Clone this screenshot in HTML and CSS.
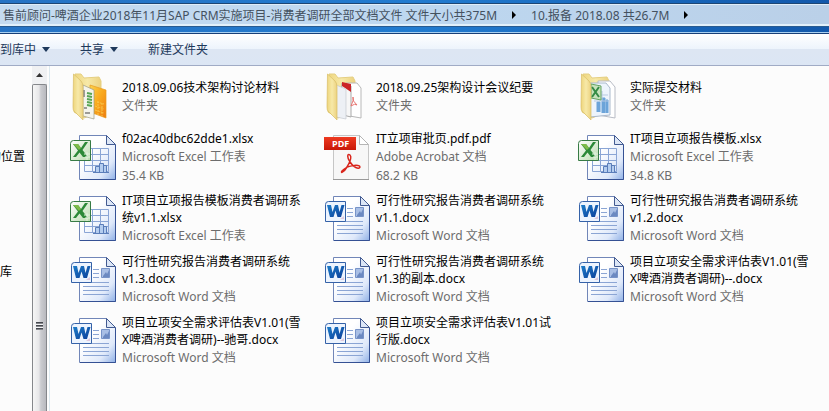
FILE: index.html
```
<!DOCTYPE html>
<html lang="zh-CN">
<head>
<meta charset="utf-8">
<title>10.报备 2018.08 共26.7M</title>
<link rel="stylesheet" href="styles.css">
</head>
<body>
<svg class="defs" width="0" height="0" aria-hidden="true">
  <defs>
    <linearGradient id="g-page" x1="0" y1="0" x2="1" y2="1">
      <stop offset="0.35" stop-color="#fff"/><stop offset="0.75" stop-color="#dfe9fa"/><stop offset="1" stop-color="#8fb0e6"/>
    </linearGradient>
    <linearGradient id="g-folder" x1="0" y1="0" x2="1" y2="0">
      <stop offset="0" stop-color="#eed57c"/><stop offset="0.5" stop-color="#f7e9a8"/><stop offset="1" stop-color="#ecd280"/>
    </linearGradient>
    <linearGradient id="g-orange" x1="0" y1="0" x2="1" y2="1">
      <stop offset="0" stop-color="#fbd24e"/><stop offset="0.5" stop-color="#f9a81c"/><stop offset="1" stop-color="#ee7c10"/>
    </linearGradient>
    <linearGradient id="g-green" x1="0" y1="0" x2="1" y2="1">
      <stop offset="0" stop-color="#fff"/><stop offset="1" stop-color="#b9dcae"/>
    </linearGradient>
    <linearGradient id="g-red" x1="0" y1="0" x2="0" y2="1">
      <stop offset="0" stop-color="#ee3a20"/><stop offset="1" stop-color="#c81808"/>
    </linearGradient>
    <linearGradient id="g-w" x1="0" y1="0" x2="1" y2="1">
      <stop offset="0" stop-color="#1d7cc8"/><stop offset="1" stop-color="#0c3f9a"/>
    </linearGradient>
  </defs>
  <symbol id="page" viewBox="0 0 48 48">
    <path d="M9.500 1.500H36.500L45.500 10.500V45.500H9.500Z" fill="url(#g-page)" stroke="#7186b8"/>
    <path d="M10 45.500H45.500V11" fill="none" stroke="#355194"/>
    <path d="M36.500 1.500V10.500H45.500Z" fill="#dce6f6" stroke="#425a91"/>
  </symbol>
  <symbol id="excel" viewBox="0 0 48 48">
    <use href="#page"/>
    <path d="M14.500 14.500H38.500V37.500H14.500ZM14 20.500H39M14 26.500H39M14 31.500H39M22.500 14V38M30.500 14V38" fill="none" stroke="#8aa5d5"/>
    <path d="M25.500 38V32.500H29.500V38M29.500 38V29.500H33.500V38M33.500 38V31.500H36.500V38" fill="#b4cdef" stroke="#5a7db9"/>
    <path d="M23 38.500H39" stroke="#5a7db9"/>
    <path d="M3.500 6.500H20.500V26.500H.5V9.500Q.5 6.500 3.500 6.500Z" fill="url(#g-green)" stroke="#377b45"/>
    <path d="M3 10H8L11 14L15 8H18L12.500 16L18 23H13L9.500 18.500L6 23H3L8 16.500Z" fill="#2c8938"/>
    <path d="M3 10H8L11 14L9 16Z" fill="#7dbb48"/>
    <path d="M14 20H20M15 23H20M17 18V26" stroke="#e3f2df"/>
  </symbol>
  <symbol id="word" viewBox="0 0 48 48">
    <use href="#page"/>
    <path d="M23 13.500H29M23 17.500H29M23 21.500H29M13 26.500H39M13 30.500H39M13 34.500H39M13 38.500H39" stroke="#8ba5d4"/>
    <path d="M31.500 12.500H39.500V21.500H31.500Z" fill="#a9bfe5" stroke="#7793c8"/>
    <path d="M33 20L36 16L37 18L39 14V21H33Z" fill="#6b89c1"/>
    <path d="M4.500 6.500H21.500V26.500H1.500V9.500Q1.500 6.500 4.500 6.500Z" fill="#edf4fe" stroke="#3562a8"/>
    <path d="M3 10H7L8.500 17L11 10H14L15.500 17L17.500 10H20.500L17 22H13.500L11.500 15.500L9.500 22H6Z" fill="url(#g-w)"/>
    <path d="M16 24L20 21V24Z" fill="#dfc8dc"/>
  </symbol>
  <symbol id="folder-back" viewBox="0 0 48 48">
    <path d="M5 1H11L14 5L29 4L31 8V38L14 45L4 39Z" fill="url(#g-folder)" stroke="#e5cf82"/>
  </symbol>
  <symbol id="folder-front" viewBox="0 0 48 48">
    <path d="M3.500 1L11 8Q13 10 13 14V47L4 38Q3 37 3 34Z" fill="url(#g-folder)" stroke="#d9bd65" stroke-width=".7"/>
  </symbol>
  <symbol id="folder-office" viewBox="0 0 48 48">
    <use href="#folder-back"/>
    <path d="M20 12L36 17V45L20 39Z" fill="url(#g-orange)" stroke="#e69b21" stroke-width=".7"/>
    <path d="M27 29L34 31M25 33L34 36M25 37L34 40M28 28V42M32 30V43" stroke="#f8c447" stroke-dasharray="2 1"/>
    <path d="M13 12L24 17V46L13 43Z" fill="#f4f4ec" stroke="#9b9a83" stroke-width=".7"/>
    <path d="M17 20L22 21M17 23L22 24M17 26L22 27M17 29L22 30M17 32L22 33" stroke="#57a554" stroke-width="2"/>
    <path d="M14 17V24M14 35H17M15 40H20" stroke="#444"/>
    <use href="#folder-front"/>
  </symbol>
  <symbol id="folder-pdf" viewBox="0 0 48 48">
    <use href="#folder-back"/>
    <path d="M22 10H33L37 15V45L20 42Z" fill="#fff" stroke="#b8b8b8"/>
    <path d="M18 10L27 13V44L15 41Z" fill="#f7f7f7" stroke="#aaa"/>
    <path d="M18 9L27 11V19L18 13Z" fill="#cb2427"/>
    <path d="M27 33Q30 27 29 24Q28 28 33 32Q31 30 27 33" fill="none" stroke="#e77773"/>
    <path d="M12 12L22 16V46L12 44Z" fill="#edf0f5" stroke="#c4c9d0" stroke-width=".7"/>
    <use href="#folder-front"/>
  </symbol>
  <symbol id="folder-excel" viewBox="0 0 48 48">
    <use href="#folder-back"/>
    <path d="M20 8H32L37 14V45L20 42Z" fill="#fff" stroke="#b8bcc5"/>
    <path d="M12 10H28L32 15V42L12 44Z" fill="#edf4fc" stroke="#aab9cc"/>
    <path d="M19 39V29H22V39M24 40V25H27V40M28 40V27H30V40" fill="#6da4d9" stroke="#6da4d9"/>
    <path d="M16 28H30M16 22H30M24 18V28" stroke="#b7cae3"/>
    <path d="M13 11L23 13V27L13 25Z" fill="#c7e2bc" stroke="#65a361"/>
    <path d="M14 14L21 24M21 14L14 24" stroke="#358b45" stroke-width="2"/>
    <use href="#folder-front"/>
  </symbol>
</svg>

<header class="titlebar">
  <nav class="address" aria-label="地址">
    <a href="#">售前顾问-啤酒企业2018年11月SAP CRM实施项目-消费者调研全部文档文件 文件大小共375M</a>
    <svg class="chevron" viewBox="0 0 4 8" aria-hidden="true"><path d="M0 0L4 4L0 8Z"/></svg>
    <a href="#">10.报备 2018.08 共26.7M</a>
    <svg class="chevron" viewBox="0 0 4 8" aria-hidden="true"><path d="M0 0L4 4L0 8Z"/></svg>
  </nav>
</header>

<div class="toolbar">
  <button type="button" class="include">到库中<svg class="caret" viewBox="0 0 8 5" aria-hidden="true"><path d="M0 0H8L4 5Z"/></svg></button>
  <button type="button">共享<svg class="caret" viewBox="0 0 8 5" aria-hidden="true"><path d="M0 0H8L4 5Z"/></svg></button>
  <button type="button">新建文件夹</button>
</div>

<div class="body">
  <nav class="sidebar" aria-label="导航">
    <a href="#" class="recent">的位置</a>
    <a href="#" class="library">库</a>
  </nav>
  <div class="scrollbar">
    <div class="scroll-up"><svg viewBox="0 0 7 4" aria-hidden="true"><path d="M0 4L3.500 0L7 4Z"/></svg></div>
    <div class="thumb"><div class="grip"></div></div>
  </div>
  <main class="files">
    <article class="tile"><svg class="icon"><use href="#folder-office"/></svg><div><h2>2018.09.06技术架构讨论材料</h2><p>文件夹</p></div></article>
    <article class="tile"><svg class="icon"><use href="#folder-pdf"/></svg><div><h2>2018.09.25架构设计会议纪要</h2><p>文件夹</p></div></article>
    <article class="tile"><svg class="icon"><use href="#folder-excel"/></svg><div><h2>实际提交材料</h2><p>文件夹</p></div></article>

    <article class="tile"><svg class="icon"><use href="#excel"/></svg><div><h2>f02ac40dbc62dde1.xlsx</h2><p>Microsoft Excel 工作表</p><p>35.4 KB</p></div></article>
    <article class="tile">
      <svg class="icon" viewBox="0 0 48 48">
        <path d="M9.500 1.500H35.500L44.500 10.500V45.500H9.500Z" fill="#f7f7f7" stroke="#c6c6c6"/>
        <path d="M9 45.500H45" stroke="#999"/>
        <path d="M35.500 1.500V10.500H44.500Z" fill="#fff" stroke="#b5b5b5"/>
        <path d="M0 3H32V16H0Z" fill="url(#g-red)"/>
        <text x="8" y="13" class="pdf-label">PDF</text>
        <path d="M26 21C23 19 23 24 26 28C29 33 35 36 36 33C36 30 23 31 18 37C16 40 20 38 23 33C26 28 28 23 26 21Z" fill="none" stroke="#d9251c" stroke-width="1.500"/>
      </svg>
      <div><h2>IT立项审批页.pdf.pdf</h2><p>Adobe Acrobat 文档</p><p>68.2 KB</p></div>
    </article>
    <article class="tile"><svg class="icon"><use href="#excel"/></svg><div><h2>IT项目立项报告模板.xlsx</h2><p>Microsoft Excel 工作表</p><p>34.8 KB</p></div></article>

    <article class="tile"><svg class="icon"><use href="#excel"/></svg><div><h2>IT项目立项报告模板消费者调研系<br>统v1.1.xlsx</h2><p>Microsoft Excel 工作表</p></div></article>
    <article class="tile"><svg class="icon"><use href="#word"/></svg><div><h2>可行性研究报告消费者调研系统<br>v1.1.docx</h2><p>Microsoft Word 文档</p></div></article>
    <article class="tile"><svg class="icon"><use href="#word"/></svg><div><h2>可行性研究报告消费者调研系统<br>v1.2.docx</h2><p>Microsoft Word 文档</p></div></article>

    <article class="tile"><svg class="icon"><use href="#word"/></svg><div><h2>可行性研究报告消费者调研系统<br>v1.3.docx</h2><p>Microsoft Word 文档</p></div></article>
    <article class="tile"><svg class="icon"><use href="#word"/></svg><div><h2>可行性研究报告消费者调研系统<br>v1.3的副本.docx</h2><p>Microsoft Word 文档</p></div></article>
    <article class="tile"><svg class="icon"><use href="#word"/></svg><div><h2>项目立项安全需求评估表V1.01(雪<br>X啤酒消费者调研)--.docx</h2><p>Microsoft Word 文档</p></div></article>

    <article class="tile"><svg class="icon"><use href="#word"/></svg><div><h2>项目立项安全需求评估表V1.01(雪<br>X啤酒消费者调研)--驰哥.docx</h2><p>Microsoft Word 文档</p></div></article>
    <article class="tile"><svg class="icon"><use href="#word"/></svg><div><h2>项目立项安全需求评估表V1.01试<br>行版.docx</h2><p>Microsoft Word 文档</p></div></article>
  </main>
</div>
</body>
</html>
```

FILE: styles.css
```
* { box-sizing: border-box; }

body {
  margin: 0;
  height: 100vh;
  display: flex;
  flex-direction: column;
  overflow: hidden;
  background: #fcfcfc;
  color: #000;
  font: 12px/17px "Noto Sans", "Noto Sans CJK SC", sans-serif;
  white-space: nowrap;
}

a { color: inherit; text-decoration: none; }

.defs { position: absolute; }

.pdf-label {
  font: bold 9px "Open Sans", sans-serif;
  fill: #fff;
}

.titlebar {
  padding: 3px 0 6px;
  background: linear-gradient(90deg, #2673c4, #217bd0 50%, #1258ab);
  border-bottom: 1px solid #173f78;
  box-shadow: inset 0 -1px #a9d0f0;
}

.address {
  display: flex;
  align-items: center;
  gap: 15px;
  height: 24px;
  padding-left: 3px;
  border-top: 1px solid #1d4674;
  border-bottom: 1px solid #285b91;
  background: linear-gradient(90deg, #c5dbf0, #bdd7f0 50%, #bad0e8);
  box-shadow: inset 0 1px #e0edf8, inset 0 -2px #e2f0fa;
  color: #44515f;
}

.chevron { width: 4px; height: 8px; fill: #000; }

.toolbar {
  display: flex;
  gap: 30px;
  height: 32px;
  border-bottom: 1px solid #a0abc5;
  background: linear-gradient(#fff, #edf4fc 48%, #dde6f3 50%, #dce6f4);
}

.toolbar button {
  display: flex;
  align-items: center;
  gap: 6px;
  padding: 0;
  border: 0;
  background: none;
  color: #1e395b;
  font: inherit;
}

.caret { width: 8px; height: 5px; fill: #1e395b; }

.body {
  flex: 1;
  display: flex;
  min-height: 0;
}

.sidebar {
  flex: 0 0 32px;
  display: flex;
  flex-direction: column;
  gap: 98px;
  padding: 82px 7px 0 0;
  overflow: hidden;
}

.recent { align-self: flex-end; }

.scrollbar {
  flex: 0 0 15px;
  display: flex;
  flex-direction: column;
  background: #f0f1f3;
}

.scroll-up {
  height: 18px;
  display: flex;
  align-items: center;
  justify-content: center;
}

.scroll-up svg { width: 7px; height: 4px; fill: #333; }

.thumb {
  flex: 1;
  display: flex;
  justify-content: center;
  padding-top: 237px;
  border: 1px solid #85878b;
  border-bottom: 0;
  border-radius: 2px 2px 0 0;
  background: linear-gradient(90deg, #f6f6f6, #e7e7e9 45%, #cbccd0 60%, #b8b9be);
}

.grip {
  width: 7px;
  height: 8px;
  background: repeating-linear-gradient(#45484e 0 1px, #85878c 1px 2px, #f4f4f6 2px 3px);
}

.files {
  flex: 1;
  display: grid;
  grid-template-columns: repeat(auto-fill, 254px);
  grid-auto-rows: 61px;
  align-content: start;
  margin-left: 2px;
  padding-left: 20px;
  border-left: 1px solid #dce9ef;
}

.tile {
  display: flex;
  align-items: center;
  gap: 4px;
}

.icon { flex: none; width: 48px; height: 48px; }

.tile h2 {
  margin: 0;
  font-size: 12px;
  font-weight: 400;
  line-height: 17px;
}

.tile p {
  margin: 0;
  color: #6d6d6d;
  line-height: 19px;
}

/* The last column's trailing space may run past a narrow window. */
@media (max-width: 831px) {
  .files { grid-template-columns: repeat(3, 254px); }
}
```
